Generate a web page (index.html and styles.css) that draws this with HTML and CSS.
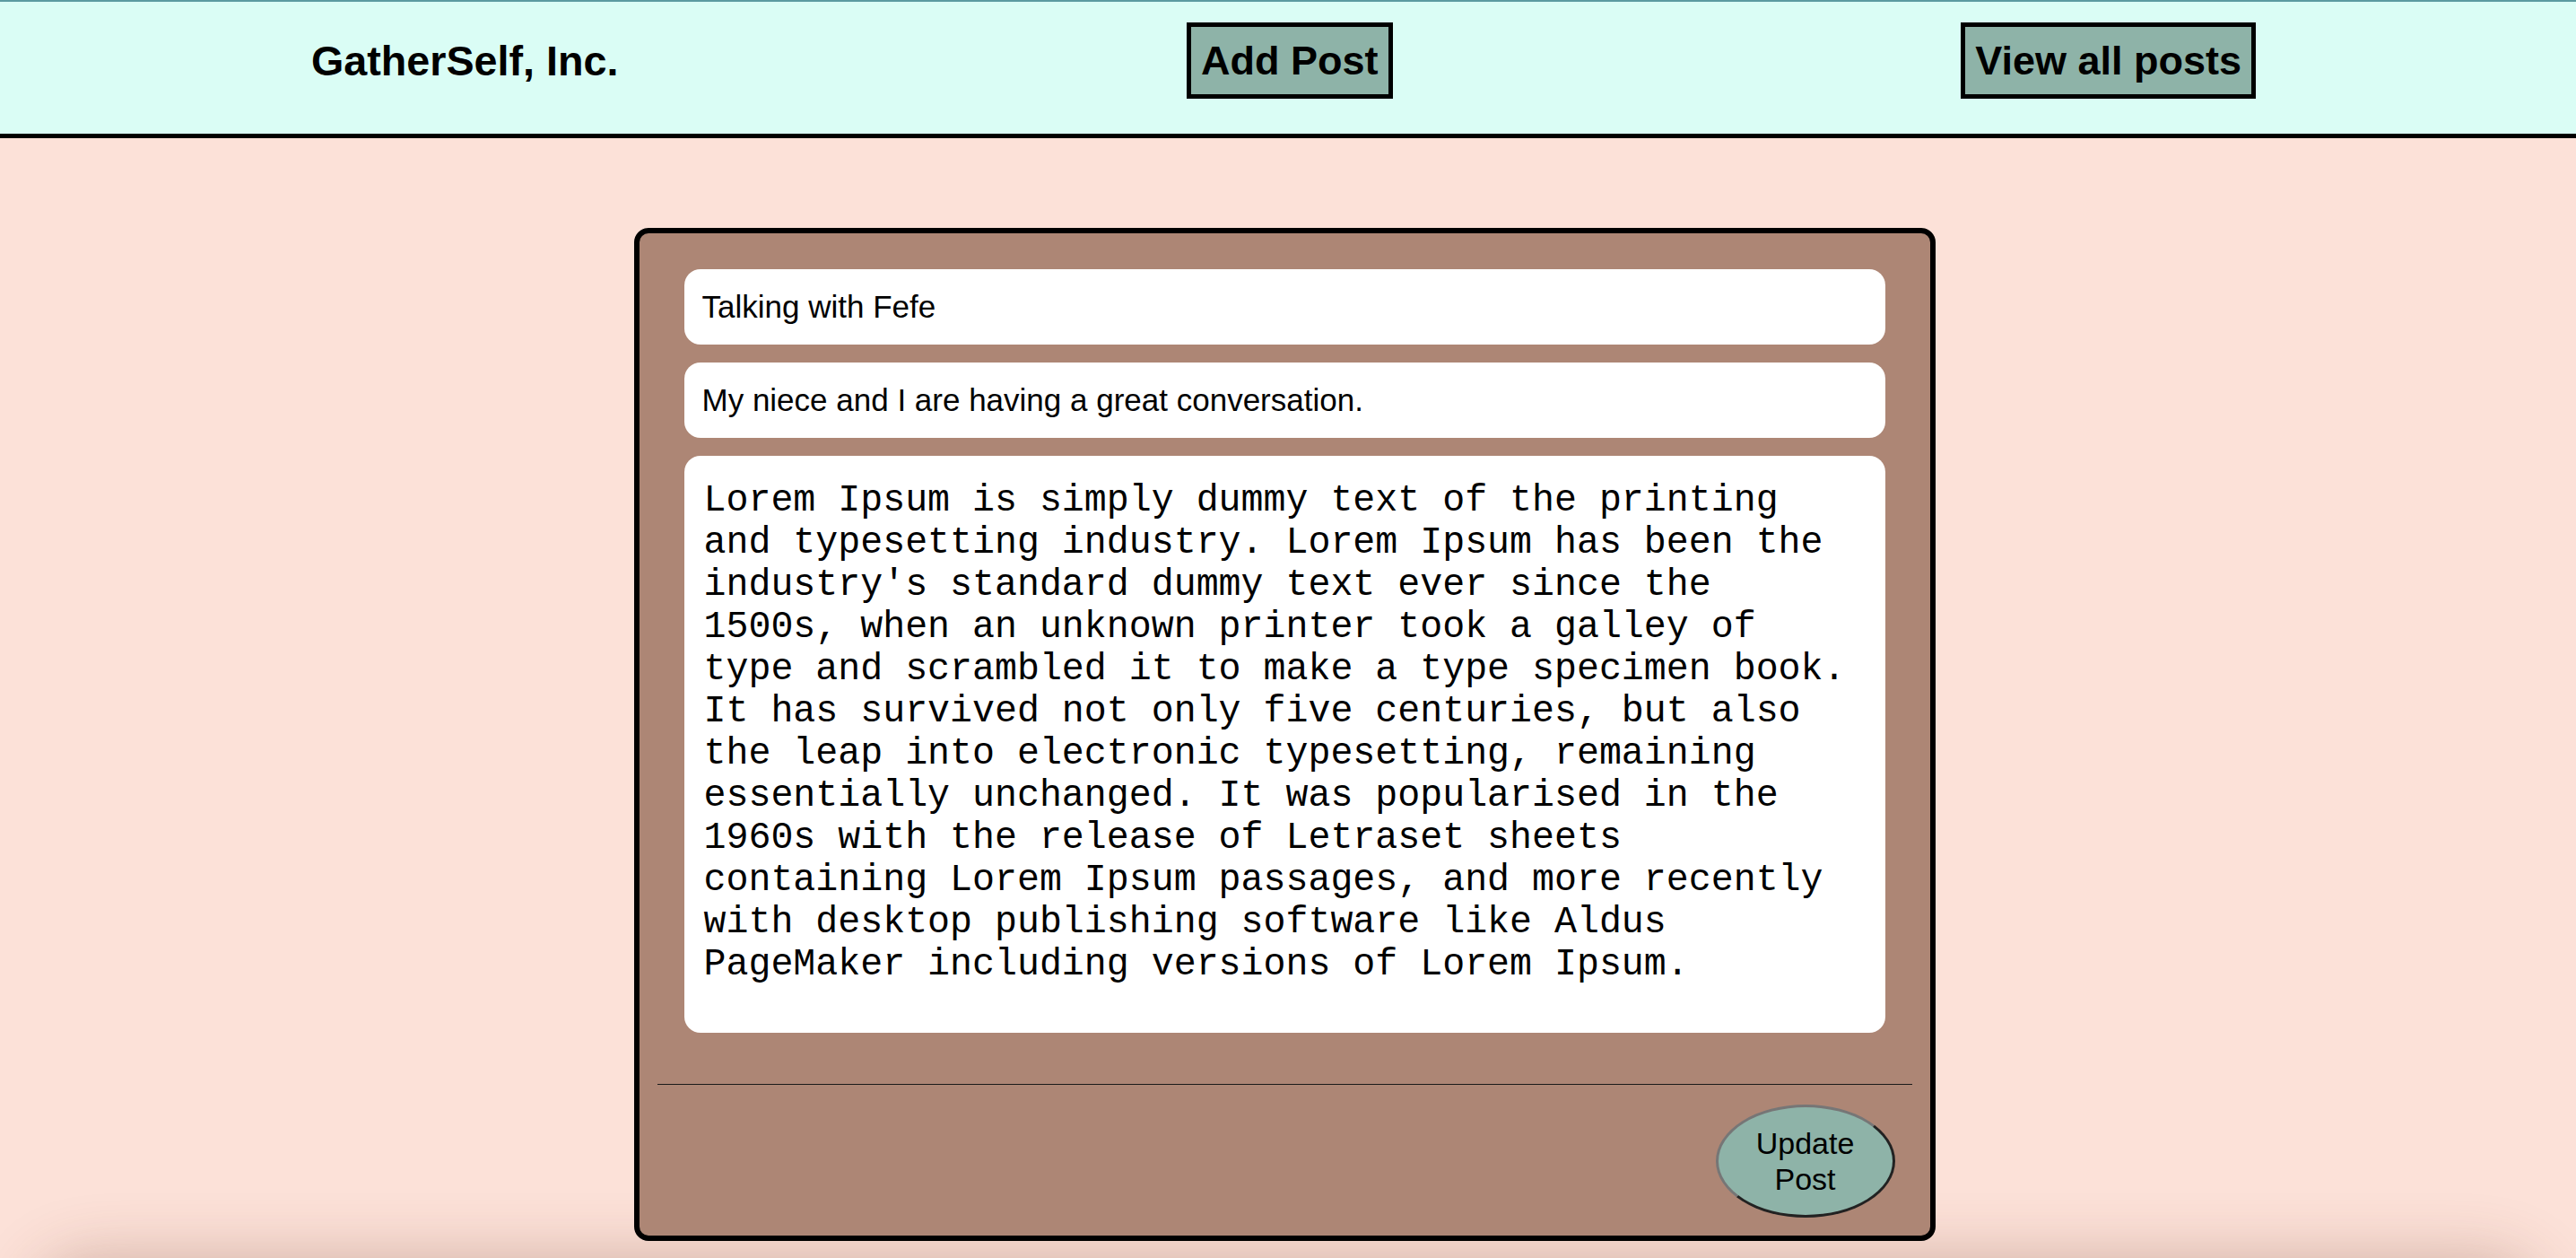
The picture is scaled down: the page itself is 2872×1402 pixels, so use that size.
FILE: index.html
```html
<!DOCTYPE html>
<html lang="en">
<head>
    <meta charset="UTF-8">
    <title>GatherSelf, Inc.</title>
    <link rel="stylesheet" href="styles.css">
</head>
<body>
    <header class="site-header">
        <h1 class="brand">GatherSelf, Inc.</h1>
        <button class="nav-btn">Add Post</button>
        <button class="nav-btn">View all posts</button>
    </header>

    <main class="page">
        <form class="post-card">
            <div class="post-fields">
                <input type="text" class="post-input" value="Talking with Fefe">
                <input type="text" class="post-input" value="My niece and I are having a great conversation.">
                <textarea class="post-body">Lorem Ipsum is simply dummy text of the printing and typesetting industry. Lorem Ipsum has been the industry's standard dummy text ever since the 1500s, when an unknown printer took a galley of type and scrambled it to make a type specimen book. It has survived not only five centuries, but also the leap into electronic typesetting, remaining essentially unchanged. It was popularised in the 1960s with the release of Letraset sheets containing Lorem Ipsum passages, and more recently with desktop publishing software like Aldus PageMaker including versions of Lorem Ipsum.</textarea>
            </div>
            <hr class="post-divider">
            <div class="post-actions">
                <button type="button" class="update-btn">Update Post</button>
            </div>
        </form>
    </main>

    <footer class="site-footer"></footer>
</body>
</html>
```

FILE: styles.css
```css
body {
    margin: 0;
    font-family: "Liberation Sans", Arial, sans-serif;
    background-color: #fce1d8;
    overflow: hidden;
}
.site-header {
    display: flex;
    justify-content: space-between;
    align-items: center;
    padding: 23px 357px 39px 347px;
    background-color: #dafdf5;
    border-top: 2px solid #5b9aa0;
    border-bottom: 5px solid #000;
}
.brand {
    margin: 0;
    font-size: 46.7px;
    font-weight: bold;
    color: #000;
}
.nav-btn {
    font-family: "Liberation Sans", Arial, sans-serif;
    font-size: 45px;
    font-weight: bold;
    line-height: 53px;
    padding: 11px 11px;
    background-color: #8eb3a8;
    color: #000;
    border: 5px solid #000;
    cursor: pointer;
}
.page {
    padding-top: 100px;
}
.post-card {
    box-sizing: border-box;
    width: 1451px;
    margin: 0 auto;
    transform: translateX(-4px);
    padding: 40px 20px 20px;
    background-color: #ad8675;
    border: 6px solid #000;
    border-radius: 16px;
}
.post-fields {
    display: flex;
    flex-direction: column;
    gap: 20px;
    padding: 0 30px;
}
.post-input {
    box-sizing: border-box;
    height: 84px;
    width: 100%;
    padding: 0 20px;
    border: none;
    border-radius: 18px;
    background-color: #fff;
    font-family: "Liberation Sans", Arial, sans-serif;
    font-size: 35px;
    color: #000;
    outline: none;
}
.post-body {
    box-sizing: border-box;
    width: 100%;
    height: 643px;
    padding: 26px 22px 22px;
    border: none;
    border-radius: 18px;
    background-color: #fff;
    font-family: "Liberation Mono", "Courier New", monospace;
    font-size: 41.6px;
    line-height: 47px;
    color: #000;
    resize: none;
    overflow: hidden;
    outline: none;
}
.post-divider {
    margin: 57px 0 22px;
    border: none;
    border-top: 1px solid #1a1a1a;
}
.post-actions {
    display: flex;
    justify-content: flex-end;
    padding-right: 19px;
}
.update-btn {
    width: 200px;
    height: 126px;
    border-radius: 50%;
    border: 3px solid;
    border-color: #767676 #222 #222 #767676;
    background-color: #8eb3a8;
    font-family: "Liberation Sans", Arial, sans-serif;
    font-size: 34px;
    line-height: 40px;
    color: #000;
    padding: 0 20px;
    cursor: pointer;
}
.site-footer {
    height: 120px;
    margin: 40px 60px 0;
    border-radius: 40px;
    background-color: #ad8675;
    box-shadow: 0 0 70px 20px rgba(110, 60, 40, 0.3);
}
```
